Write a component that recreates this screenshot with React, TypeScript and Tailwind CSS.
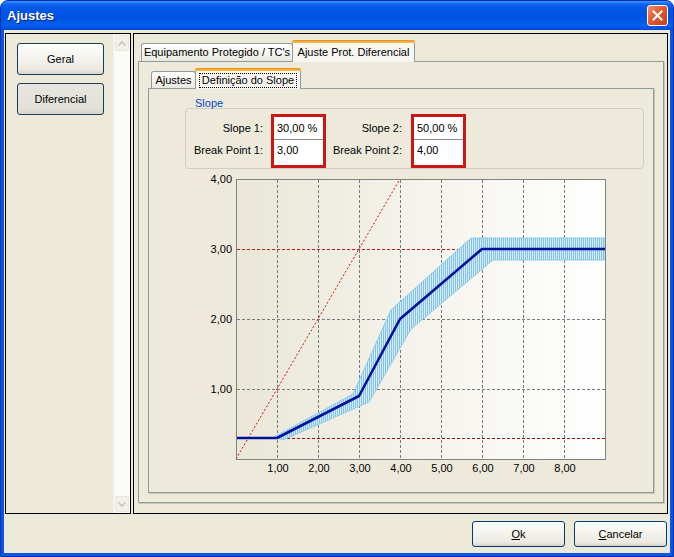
import React from "react";

const xs = [1, 2, 3, 4, 5, 6, 7, 8];
const X = (v: number) => 51 + 41 * v;
const Y = (v: number) => 287 - 70 * v;

function Chart() {
  const curve = [
    [0, 0.3],
    [1, 0.3],
    [3, 0.9],
    [4, 2],
    [6, 3],
    [9, 3],
  ]
    .map(([a, b]) => `${X(a)},${Y(b)}`)
    .join(" ");
  const band =
    "89,265 168,222 206,138 286,66 420,66 420,88 308,88 226,157 184,230 98,268";
  return (
    <svg width="458" height="310" className="block" style={{ fontFamily: "'Liberation Sans', sans-serif" }}>
      <defs>
        <linearGradient id="bg" x1="0" y1="0" x2="1" y2="0">
          <stop offset="0" stopColor="#eae7d8" />
          <stop offset="1" stopColor="#ffffff" />
        </linearGradient>
        <pattern id="hatch" width="2" height="4" patternUnits="userSpaceOnUse">
          <rect width="2" height="4" fill="#d3ecf8" />
          <rect width="1" height="4" fill="#82c3e4" />
        </pattern>
      </defs>
      <rect x="51.5" y="7.5" width="369" height="280" fill="url(#bg)" />
      {xs.map((v) => (
        <line key={v} x1={X(v) + 0.5} x2={X(v) + 0.5} y1="8" y2="287" stroke="#7a7a7a" strokeDasharray="3 2" />
      ))}
      {[1, 2].map((v) => (
        <line key={v} x1="52" x2="420" y1={Y(v) + 0.5} y2={Y(v) + 0.5} stroke="#7a7a7a" strokeDasharray="3 2" />
      ))}
      <line x1="52" x2="420" y1={Y(3) + 0.5} y2={Y(3) + 0.5} stroke="#c81818" strokeDasharray="3 2" />
      <line x1="52" x2="420" y1={Y(0.3) + 0.5} y2={Y(0.3) + 0.5} stroke="#9a1010" strokeDasharray="3 2" />
      <line x1={X(0)} y1={Y(0)} x2={X(4)} y2={Y(4)} stroke="#d01010" strokeDasharray="2 2" />
      <polygon points={band} fill="url(#hatch)" stroke="#8ccbe8" strokeWidth="1" />
      <polyline points={curve} fill="none" stroke="#00109c" strokeWidth="2.6" strokeLinejoin="round" />
      <rect x="51.5" y="7.5" width="369" height="280" fill="none" stroke="#808080" />
      {[4, 3, 2, 1].map((v) => (
        <text key={v} x="47" y={Y(v) + 4} textAnchor="end" fontSize="11" fill="#000">
          {v},00
        </text>
      ))}
      {xs.map((v) => (
        <text key={v} x={X(v) + 1} y="300" textAnchor="middle" fontSize="11" fill="#000">
          {v},00
        </text>
      ))}
    </svg>
  );
}

function RedInputs({ a, b }: { a: string; b: string }) {
  return (
    <div className="w-[55px] border-[3px] border-[#cc1616] bg-white flex flex-col">
      <div className="h-[23px] flex items-center pl-[3px] border-b border-[#8f8c84]">{a}</div>
      <div className="h-[20px] flex items-center pl-[3px]">{b}</div>
    </div>
  );
}

function Labels({ a, b, w }: { a: string; b: string; w: string }) {
  return (
    <div className={`${w} flex flex-col items-end pt-[3px]`}>
      <div className="h-[23px] flex items-center">{a}</div>
      <div className="h-[21px] flex items-center">{b}</div>
    </div>
  );
}

function XpButton({ children, pressed }: { children: React.ReactNode; pressed?: boolean }) {
  return (
    <div
      className={
        pressed
          ? "w-[87px] h-[32px] rounded-[3px] border border-[#1e3a5a] bg-[linear-gradient(180deg,#e6e5de_0%,#e3e2da_80%,#d6d4ca_100%)] flex items-center justify-center"
          : "w-[87px] h-[32px] rounded-[3px] border border-[#1e3a5a] bg-[linear-gradient(180deg,#ffffff_0%,#f5f4ef_40%,#eceae2_85%,#d8d5ca_100%)] flex items-center justify-center"
      }
    >
      {children}
    </div>
  );
}

export default function App() {
  return (
    <div className="w-[674px] h-[557px] bg-[#0a56e0] rounded-t-[8px] flex flex-col overflow-hidden font-['Liberation_Sans',sans-serif] text-[11px] text-black border border-[#0a2fb0]">
      {/* title bar */}
      <div className="h-[29px] shrink-0 flex items-center justify-between pl-[6px] pr-[5px] bg-[linear-gradient(180deg,#3d95ff_0%,#0a62ee_12%,#0056e6_30%,#0054e3_60%,#0260f0_85%,#0048d0_100%)]">
        <span className="text-white font-bold text-[13px] [text-shadow:1px_1px_0_#0a1e80]">Ajustes</span>
        <div className="w-[21px] h-[21px] rounded-[3px] border border-white bg-[linear-gradient(135deg,#f09070_0%,#e25a30_45%,#c8401c_100%)] flex items-center justify-center">
          <svg width="11" height="11" viewBox="0 0 11 11">
            <path d="M1.5 1.5 L9.5 9.5 M9.5 1.5 L1.5 9.5" stroke="#fff" strokeWidth="2" strokeLinecap="square" />
          </svg>
        </div>
      </div>
      {/* client */}
      <div className="flex-1 mx-[3px] mb-[3px] bg-[#ece9d8] flex flex-col">
        <div className="flex pl-[1px] pt-[3px] gap-[2px]">
          {/* left panel */}
          <div className="w-[126px] h-[481px] border border-black flex">
            <div className="flex-1 flex flex-col gap-[8px] pl-[11px] pt-[9px]">
              <XpButton>Geral</XpButton>
              <XpButton pressed>Diferencial</XpButton>
            </div>
            <div className="w-[17px] bg-[#fafaf6] border-l border-[#efeee8] flex flex-col justify-between py-[1px]">
              <div className="h-[16px] mx-[1px] rounded-[2px] bg-[#f1f0ea] border border-[#e8e7df] flex items-center justify-center">
                <svg width="8" height="5" viewBox="0 0 8 5">
                  <path d="M0.5 4.5 L4 1 L7.5 4.5" stroke="#c6c4ba" strokeWidth="1.5" fill="none" />
                </svg>
              </div>
              <div className="h-[16px] mx-[1px] rounded-[2px] bg-[#f1f0ea] border border-[#e8e7df] flex items-center justify-center">
                <svg width="8" height="5" viewBox="0 0 8 5">
                  <path d="M0.5 0.5 L4 4 L7.5 0.5" stroke="#c6c4ba" strokeWidth="1.5" fill="none" />
                </svg>
              </div>
            </div>
          </div>
          {/* right panel */}
          <div className="w-[535px] h-[481px] border border-black pl-[4px] pt-[6px]">
            <div className="w-[526px] flex flex-col">
              <div className="h-[21px] flex items-end pl-[3px] relative z-10">
                <div className="w-[152px] h-[18px] border border-b-0 border-[#919b9c] rounded-t-[3px] bg-[linear-gradient(180deg,#ffffff_0%,#f5f4ef_50%,#e9e8e0_100%)] flex items-center justify-center">
                  Equipamento Protegido / TC's
                </div>
                <div className="w-[123px] h-[22px] -mb-[1px] -ml-[1px] border border-b-0 border-[#919b9c] rounded-t-[3px] bg-[#faf9f5] flex flex-col">
                  <div className="h-[3px] -mx-[1px] -mt-[1px] rounded-t-[3px] bg-[linear-gradient(180deg,#e68b2c,#ffc73c)]" />
                  <div className="flex-1 flex items-center justify-center bg-[#f7f6f1]">Ajuste Prot. Diferencial</div>
                </div>
              </div>
              <div className="h-[442px] border border-[#919b9c] bg-[#edeadc] shadow-[1px_1px_0_#c9c6b8] pl-[9px] pt-[6px]">
                <div className="w-[506px] flex flex-col">
                  <div className="h-[20px] flex items-end pl-[3px] relative z-10">
                    <div className="w-[45px] h-[17px] border border-b-0 border-[#919b9c] rounded-t-[3px] bg-[linear-gradient(180deg,#ffffff_0%,#f5f4ef_50%,#e9e8e0_100%)] flex items-center justify-center">
                      Ajustes
                    </div>
                    <div className="w-[106px] h-[21px] -mb-[1px] -ml-[1px] border border-b-0 border-[#919b9c] rounded-t-[3px] bg-[#f7f6f1] flex flex-col">
                      <div className="h-[3px] -mx-[1px] -mt-[1px] rounded-t-[3px] bg-[linear-gradient(180deg,#e68b2c,#ffc73c)]" />
                      <div className="flex-1 flex items-center justify-center">
                        <span className="outline outline-1 outline-dotted outline-black px-[2px] leading-[13px]">Definição do Slope</span>
                      </div>
                    </div>
                  </div>
                  <div className="h-[405px] border border-[#919b9c] bg-[#edeadc] shadow-[1px_1px_0_#c9c6b8] pl-[36px] pt-[19px]">
                    {/* group box */}
                    <div className="relative w-[459px] h-[61px] border border-[#d0cebf] rounded-[4px] flex pt-[5px]">
                      <span className="absolute -top-[12px] left-[7px] px-[2px] text-[#0046d5] leading-[13px]">Slope</span>
                      <Labels w="w-[77px]" a="Slope 1:" b="Break Point 1:" />
                      <div className="w-[8px]" />
                      <RedInputs a="30,00 %" b="3,00" />
                      <Labels w="w-[76px]" a="Slope 2:" b="Break Point 2:" />
                      <div className="w-[9px]" />
                      <RedInputs a="50,00 %" b="4,00" />
                    </div>
                    <div className="mt-[3px]">
                      <Chart />
                    </div>
                  </div>
                </div>
              </div>
            </div>
          </div>
        </div>
        {/* bottom buttons */}
        <div className="flex justify-end gap-[9px] pr-[3px] pt-[7px]">
          <div className="w-[93px] h-[26px] rounded-[3px] border border-[#003c74] bg-[linear-gradient(180deg,#ffffff_0%,#f5f4ef_40%,#eceae2_85%,#d6d2c6_100%)] flex items-center justify-center">
            <span><span className="underline">O</span>k</span>
          </div>
          <div className="w-[93px] h-[26px] rounded-[3px] border border-[#003c74] bg-[linear-gradient(180deg,#ffffff_0%,#f5f4ef_40%,#eceae2_85%,#d6d2c6_100%)] flex items-center justify-center">
            <span><span className="underline">C</span>ancelar</span>
          </div>
        </div>
      </div>
    </div>
  );
}
